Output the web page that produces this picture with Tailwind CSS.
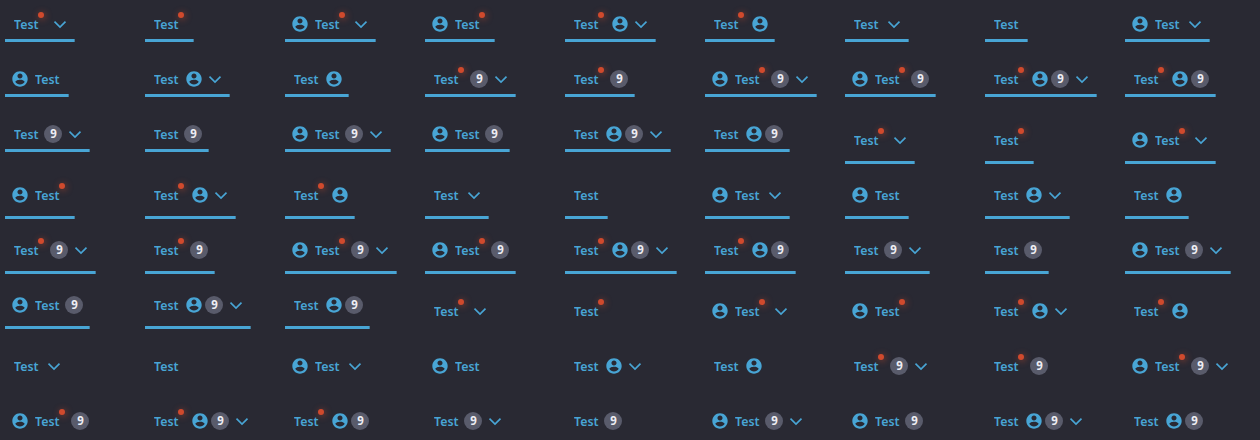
<!DOCTYPE html>
<html lang="en">
<head>
<meta charset="utf-8">
<title>Tabs</title>
<script src="https://cdn.jsdelivr.net/npm/@tailwindcss/browser@4"></script>
</head>
<body class="h-[440px] overflow-hidden bg-[#292933] font-['Noto_Sans',sans-serif]">
<main id="tabs" class="grid w-[1265px] auto-rows-[55px] grid-cols-9 pt-[5px] pl-[5px]"></main>

<template id="icon"><span class="flex h-4 w-[21px] shrink-0 items-center justify-center"><svg class="size-4 fill-[#48a5d5]" viewBox="1.6 1.6 20.8 20.8"><path d="M12 2C6.480 2 2 6.480 2 12s4.480 10 10 10 10-4.480 10-10S17.520 2 12 2zm0 2.800c1.820 0 3.300 1.480 3.300 3.300s-1.480 3.300-3.300 3.300-3.300-1.480-3.300-3.300 1.480-3.300 3.300-3.300zm0 14.400c-2.500 0-4.710-1.280-6-3.220.030-1.990 4-3.080 6-3.080 1.990 0 5.970 1.090 6 3.080-1.290 1.940-3.500 3.220-6 3.220z"/></svg></span></template>
<template id="label"><span class="w-[34px] shrink-0 pl-[4.500px] text-[#48a5d5]"><span class="block origin-left scale-x-[.95] text-[13px] leading-4 font-semibold">Test</span></span></template>
<template id="dot"><span class="relative h-4 w-1.5 shrink-0"><i class="absolute -top-[4px] -left-[5.500px] size-1.5 rounded-full bg-[#d04a2d] shadow-[1px_1px_6px_1px_#d04a2d66]"></i></span></template>
<template id="badge"><span class="flex h-4 w-[21px] shrink-0 items-center pl-[.8px]"><b class="flex size-[18px] shrink-0 items-center justify-center rounded-full bg-[#595b6b] text-[#eeeef4]"><span class="block scale-x-[.95] text-xs leading-none font-bold">9</span></b></span></template>
<template id="chevron"><span class="flex h-4 w-[21px] shrink-0 items-center justify-center"><svg class="size-4 fill-none stroke-[#48a5d5] stroke-[1.600]" viewBox="0 0 16 16"><path d="M2.500 5.600 8 11.100l5.500-5.500"/></svg></span></template>

<script>
  const part = id => document.getElementById(id).innerHTML;
  const sizes = [
    { tab: 'h-[37px] pt-[11px]', line: true },
    { tab: 'h-[49px] pt-[17px]', line: true },
    { tab: 'h-[55px] pt-[23px]', line: false },
  ];
  let html = '';
  for (const size of sizes)
    for (const badge of [false, true])
      for (const dot of [true, false])
        for (const icon of ['none', 'start', 'end'])
          for (const chevron of [true, false]) {
            html += '<div class="flex items-start"><div class="relative flex px-[4.500px] ' + size.tab + '">'
              + (icon === 'start' ? part('icon') : '') + part('label')
              + (dot ? part('dot') : '') + (icon === 'end' ? part('icon') : '')
              + (badge ? part('badge') : '') + (chevron ? part('chevron') : '')
              + (size.line ? '<i class="absolute inset-x-0 bottom-0 h-[3px] border-r border-[#427a9a] bg-[#48a5d5]"></i>' : '')
              + '</div></div>';
          }
  document.getElementById('tabs').innerHTML = html;
</script>
</body>
</html>
